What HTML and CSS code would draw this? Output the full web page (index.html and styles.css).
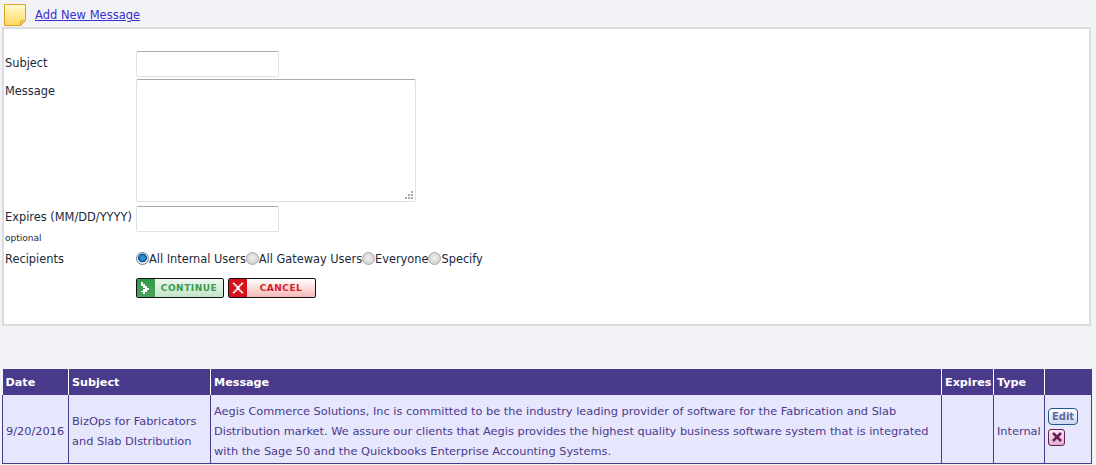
FILE: index.html
```
<!DOCTYPE html>
<html lang="en">
<head>
<meta charset="utf-8">
<title>Messages</title>
<link rel="stylesheet" href="styles.css">
</head>
<body>
<div class="add-row">
  <svg class="note" width="22" height="22" viewBox="0 0 22 22"><defs><linearGradient id="n" x1="0" y1="0" x2="0" y2="1"><stop offset="0" stop-color="#fffbd0"/><stop offset="1" stop-color="#ffd75e"/></linearGradient></defs><path d="M.5.5h21v16l-5 5H.5z" fill="url(#n)" stroke="#d9a520"/><path d="M21 17h-4.500v4.500z" fill="#f4d890" stroke="#d9a520"/></svg>
  <a class="add-link" href="#">Add New Message</a>
</div>
<form class="panel">
  <div class="field field-subject"><label class="lbl">Subject</label><input class="txt" type="text"></div>
  <div class="field field-message"><label class="lbl">Message</label><textarea class="area"></textarea></div>
  <div class="field field-expires"><div class="lbl">Expires (MM/DD/YYYY)<small class="opt">optional</small></div><input class="txt" type="text"></div>
  <div class="field field-rec"><label class="lbl">Recipients</label>
    <div class="radios">
      <input class="radio" type="radio" name="r" checked><span>All Internal Users</span>
      <input class="radio" type="radio" name="r"><span>All Gateway Users</span>
      <input class="radio" type="radio" name="r"><span>Everyone</span>
      <input class="radio" type="radio" name="r"><span>Specify</span>
    </div>
  </div>
  <div class="actions">
    <button class="btn btn-go" type="button"><span class="ico"><svg width="18" height="18" viewBox="0 0 18 18"><path d="M4 3h2v2h2v2h2v2h2v2h-2v2H8v2H6v-2H4v-1h2v-2h2V9H6V7H4z" fill="#fff"/></svg></span><span class="cap">CONTINUE</span></button>
    <button class="btn btn-stop" type="button"><span class="ico"><svg width="18" height="18" viewBox="-3 -3 24 24"><path d="M2 2h3v2h2v2h4V4h2V2h3v2h-2v2h-2v2h-1v2h1v2h2v2h2v2h-3v-2h-2v-2H7v2H5v2H2v-2h2v-2h2v-2h1V8H6V6H4V4H2z" fill="#fff"/></svg></span><span class="cap">CANCEL</span></button>
  </div>
</form>
<table class="grid">
  <colgroup><col class="c1"><col class="c2"><col class="c3"><col class="c4"><col class="c5"><col class="c6"></colgroup>
  <thead><tr><th>Date</th><th>Subject</th><th>Message</th><th>Expires</th><th>Type</th><th></th></tr></thead>
  <tbody><tr>
    <td>9/20/2016</td>
    <td>BizOps for Fabricators and Slab DIstribution</td>
    <td>Aegis Commerce Solutions, Inc is committed to be the industry leading provider of software for the Fabrication and Slab Distribution market. We assure our clients that Aegis provides the highest quality business software system that is integrated with the Sage 50 and the Quickbooks Enterprise Accounting Systems.</td>
    <td></td>
    <td>Internal</td>
    <td class="ops"><button class="edit" type="button">Edit</button><button class="del" type="button" aria-label="Delete"><svg width="12" height="12" viewBox="0 0 12 12"><path d="M2 2l8 8M10 2l-8 8" stroke="#6d1a55" stroke-width="2.600"/></svg></button></td>
  </tr></tbody>
</table>
</body>
</html>
```
FILE: styles.css
```
* { box-sizing: border-box; }
html, body { margin: 0; padding: 0; }
body {
  background: #f2f3f7;
  font-family: "DejaVu Sans", Verdana, sans-serif;
  font-size: 11.4px;
  color: #1a2a3a;
  overflow: hidden;
}
.add-row { display: flex; align-items: flex-start; height: 27px; padding: 4px 0 0 4px; }
.note { display: block; margin-right: 9px; }
.add-link { color: #3a2fd0; font-size: 11.5px; line-height: 15px; margin-top: 4px; }
.panel {
  margin-left: 2px;
  width: 1089px;
  height: 299px;
  background: #fff;
  border: 2px solid #dcdcdc;
  padding: 22px 0 0 1px;
}
.field { display: flex; }
.lbl { width: 131px; padding-top: 5px; flex: none; line-height: 15px; white-space: nowrap; }
.field-expires .lbl { padding-top: 4px; }
.field-subject { height: 28px; }
.field-message { height: 127px; }
.field-expires { height: 39px; }
.field-rec { height: 26px; align-items: center; }
.field-rec .lbl { padding-top: 2px; }
.opt { display: block; font-size: 9px; margin-top: 8px; line-height: 11px; }
.txt {
  width: 143px; height: 26px; margin: 0;
  border: 1px solid #dfe1e8; border-top-color: #aaa; border-radius: 2px;
  background: #fff;
}
.area {
  display: block; width: 280px; height: 123px; margin: 0; resize: none;
  border: 1px solid #dfe1e8; border-top-color: #aaa; border-radius: 2px;
  background-color: #fff;
  background-image:
    linear-gradient(#aaa, #aaa), linear-gradient(#aaa, #aaa), linear-gradient(#aaa, #aaa),
    linear-gradient(#aaa, #aaa), linear-gradient(#aaa, #aaa), linear-gradient(#aaa, #aaa);
  background-size: 2px 2px;
  background-repeat: no-repeat;
  background-position:
    right 2px bottom 2px, right 5px bottom 2px, right 8px bottom 2px,
    right 2px bottom 5px, right 5px bottom 5px, right 2px bottom 8px;
}
.radios { display: flex; align-items: center; }
.radios span { letter-spacing: -.02px; padding-top: 1px; }
.radio {
  appearance: none; width: 13px; height: 13px; margin: 0; border-radius: 50%;
  border: 1px solid #a8a8a8;
  background: radial-gradient(circle at 50% 45%, #f0f0f0, #d4d4d4 70%, #bdbdbd);
}
.radio:checked { background: radial-gradient(circle at 50% 45%, #2f8fd0 0 25%, #0d4d86 50%, #e8eef4 58%); border-color: #6b7f92; }
.actions { display: flex; gap: 4px; margin-left: 131px; margin-top: 7px; }
.btn {
  display: flex; align-items: stretch; width: 88px; height: 20px; margin: 0; padding: 0;
  border: 1px solid #111; border-radius: 2px; overflow: hidden; font-family: "DejaVu Sans", sans-serif;
}
.ico { width: 18px; display: block; flex: none; }
.ico svg { display: block; width: 18px; height: 18px; }
.cap { flex: 1; font-size: 9px; font-weight: bold; letter-spacing: .5px; line-height: 18px; text-align: center; }
.btn-go { background: linear-gradient(#eef8ef, #c4e4c8); color: #3c9a50; }
.btn-go .ico { background: linear-gradient(#2f9a48, #4aa35a); }
.btn-stop { background: linear-gradient(#fff, #f6b8b8); color: #d8202c; }
.btn-stop .ico { background: #d8101c; }
.grid {
  margin: 43px 0 0 2px;
  width: 1089px;
  table-layout: fixed;
  border-collapse: collapse;
}
.c1 { width: 66px; } .c2 { width: 142px; } .c3 { width: 731px; } .c4 { width: 52px; } .c5 { width: 51px; } .c6 { width: 47px; }
.grid th {
  height: 26px; padding: 1px 3px 0; background: #4a3a8c; color: #fff; text-align: left; font-weight: bold; font-size: 11.2px;
  border-left: 1px solid #fff;
  white-space: nowrap;
}
.grid th:first-child { border-left: 0; }
.grid td {
  height: 68px; padding: 4px 3px 0; background: #e6e6fc; color: #4a3a8c; line-height: 20px; font-size: 11.35px;
  border: 1px solid #4a3a8c; border-top: 0;
}
.grid .ops { padding: 0 3px 4px; }
.edit {
  display: block; width: 30px; height: 17px; margin: 0; padding: 0;
  border: 1px solid #1d5a8a; border-radius: 4px;
  background: linear-gradient(#fff, #ccd6ee); color: #5a6aa8; font: bold 10px "DejaVu Sans", sans-serif;
}
.del {
  display: flex; align-items: center; justify-content: center; width: 17px; height: 17px; margin: 4px 0 0; padding: 0;
  border: 1px solid #6d1a55; border-radius: 3px; background: linear-gradient(#f6eef4, #dcb0cf);
}
```
